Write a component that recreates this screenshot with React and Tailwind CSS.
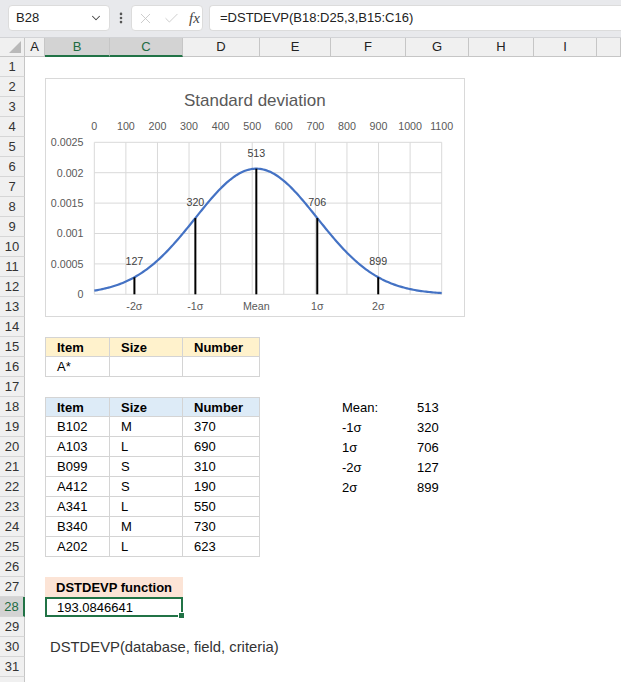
import { Check, ChevronDown, EllipsisVertical, X } from "lucide-react";

// sheet columns after the row header (25px)
const COLS = [
  ["A", "w-[20px]"],
  ["B", "w-[65px]"],
  ["C", "w-[73px]"],
  ["D", "w-[77px]"],
  ["E", "w-[71px]"],
  ["F", "w-[75px]"],
  ["G", "w-[63px]"],
  ["H", "w-[65px]"],
  ["I", "w-[63px]"],
  ["J", "flex-1"],
];

const T = "border-r border-b border-[#d4d4d4]";
const TL = "border-l border-r border-b border-[#d4d4d4]";

function RowHead({ n, active }) {
  return (
    <div
      className={[
        "flex h-[20px] w-[25px] shrink-0 items-center justify-center border-b border-b-[#d6d6d6] text-[13px]",
        active
          ? "border-r-2 border-r-[#217346] bg-[#d3d3d3] text-[#1e6b41]"
          : "border-r border-r-[#c6c6c6] bg-[#f0f0f0] text-[#333]",
      ].join(" ")}
    >
      {n}
    </div>
  );
}

function Row({ n, active, cells = {} }) {
  const out = [];
  for (let i = 0; i < COLS.length; i++) {
    const [k, w] = COLS[i];
    const c = cells[k];
    const pad = c?.pl || "pl-[11px]";
    if (c && c.merge) {
      out.push(
        <div key={k} className={["relative flex h-full w-[138px] shrink-0 items-center whitespace-nowrap pt-[1px]", pad, c.cls || ""].join(" ")}>
          {c.t}
          {c.handle && (
            <span className="absolute -bottom-[4px] -right-[4px] h-[7px] w-[7px] border border-white bg-[#217346]" />
          )}
        </div>
      );
      i++;
      continue;
    }
    out.push(
      <div key={k} className={[w, "flex h-full shrink-0 items-center whitespace-nowrap pt-[1px]", pad, c?.cls || ""].join(" ")}>
        {c?.t}
      </div>
    );
  }
  return (
    <div className="flex h-[20px]">
      <RowHead n={n} active={active} />
      {out}
    </div>
  );
}

function Chart() {
  const x0 = 49.3, x1 = 396.7, yt = 64.3, yb = 216.3;
  const px = (v) => x0 + (v / 1100) * (x1 - x0);
  const py = (p) => yb - (p / 0.0025) * (yb - yt);
  const mean = 513, sd = 193.0846641;
  const pdf = (v) => Math.exp(-((v - mean) ** 2) / (2 * sd * sd)) / (sd * Math.sqrt(2 * Math.PI));

  const pts = [];
  for (let v = 0; v <= 1100; v += 5) pts.push(`${px(v).toFixed(2)},${py(pdf(v)).toFixed(2)}`);

  const xs = [0, 100, 200, 300, 400, 500, 600, 700, 800, 900, 1000, 1100];
  const ys = [0, 0.0005, 0.001, 0.0015, 0.002, 0.0025];
  const yLabels = ["0", "0.0005", "0.001", "0.0015", "0.002", "0.0025"];
  const marks = [
    { v: 127, label: "-2σ" },
    { v: 320, label: "-1σ" },
    { v: 513, label: "Mean" },
    { v: 706, label: "1σ" },
    { v: 899, label: "2σ" },
  ];

  return (
    <svg width="418" height="237" viewBox="1 1 418 237" className="block font-['Liberation_Sans',Arial,sans-serif]">
      <text x="209.8" y="27.5" textAnchor="middle" fontSize="17" fill="#595959">Standard deviation</text>

      {xs.map((v) => (
        <line key={"gx" + v} x1={px(v)} x2={px(v)} y1={yt} y2={yb} stroke="#d9d9d9" strokeWidth="1" />
      ))}
      {ys.map((p) => (
        <line key={"gy" + p} x1={x0} x2={x1} y1={py(p)} y2={py(p)} stroke="#d9d9d9" strokeWidth="1" />
      ))}

      {xs.map((v) => (
        <text key={"tx" + v} x={px(v)} y="52" textAnchor="middle" fontSize="10.7" fill="#595959">{v}</text>
      ))}
      {ys.map((p, i) => (
        <text key={"ty" + p} x="38.5" y={py(p) + 3.8} textAnchor="end" fontSize="10.7" fill="#595959">{yLabels[i]}</text>
      ))}

      <polyline points={pts.join(" ")} fill="none" stroke="#4472c4" strokeWidth="2.2" strokeLinejoin="round" />

      {marks.map((m) => {
        const top = py(pdf(m.v));
        return (
          <g key={m.v}>
            <line x1={px(m.v)} x2={px(m.v)} y1={top} y2={yb} stroke="#000" strokeWidth="2" />
            <text x={px(m.v)} y={top - 12} textAnchor="middle" fontSize="10.7" fill="#404040">{m.v}</text>
            <text x={px(m.v)} y="232" textAnchor="middle" fontSize="10.7" fill="#595959">{m.label}</text>
          </g>
        );
      })}
    </svg>
  );
}

export default function App() {
  const stats = [
    ["Mean:", "513"],
    ["-1σ", "320"],
    ["1σ", "706"],
    ["-2σ", "127"],
    ["2σ", "899"],
  ];
  const data = [
    ["B102", "M", "370"],
    ["A103", "L", "690"],
    ["B099", "S", "310"],
    ["A412", "S", "190"],
    ["A341", "L", "550"],
    ["B340", "M", "730"],
    ["A202", "L", "623"],
  ];

  return (
    <div className="h-[682px] w-[621px] overflow-hidden bg-white font-['Liberation_Sans',Arial,sans-serif] text-[13px] text-black">
      {/* ── Formula bar ── */}
      <div className="flex h-[38px] items-center border-b border-[#d2d3d6] bg-[#e8e9ec] pb-[1px]">
        <div className="ml-[8px] flex h-[26px] w-[102px] items-center justify-between rounded-[4px] border border-[#dcdcdc] bg-white pl-[7px] pr-[6px] text-[13px] text-[#222]">
          <span>B28</span>
          <ChevronDown size={14} strokeWidth={1.8} className="text-[#444]" />
        </div>
        <div className="flex w-[21px] justify-center text-[#555]">
          <EllipsisVertical size={14} strokeWidth={2.5} />
        </div>
        <div className="flex h-[26px] w-[72px] items-center gap-[9px] rounded-[4px] border border-[#dcdcdc] bg-white pl-[5px] text-[#c4c4c4]">
          <X size={17} strokeWidth={1.2} />
          <Check size={17} strokeWidth={1.2} />
          <span className="font-['Liberation_Serif',serif] text-[15px] italic text-[#444]">fx</span>
        </div>
        <div className="ml-[6px] flex h-[26px] flex-1 items-center rounded-l-[4px] border border-r-0 border-[#dcdcdc] bg-white pl-[10px] text-[13px] text-[#222]">
          =DSTDEVP(B18:D25,3,B15:C16)
        </div>
      </div>

      {/* ── Column headers ── */}
      <div className="flex h-[19px] bg-[#f0f0f0] text-[13px] text-[#222]">
        <div className="relative w-[25px] shrink-0 border-r border-b border-[#c6c6c6]">
          <svg width="12" height="12" className="absolute bottom-[3px] right-[3px]">
            <polygon points="12,0 12,12 0,12" fill="#b9b9b9" />
          </svg>
        </div>
        {COLS.map(([k, w]) => (
          <div
            key={k}
            className={[
              w,
              "flex shrink-0 items-center justify-center border-r border-r-[#c6c6c6]",
              k === "B" || k === "C"
                ? "border-b-2 border-b-[#217346] bg-[#d3d3d3] text-[#1e6b41]"
                : "border-b border-b-[#c6c6c6]",
            ].join(" ")}
          >
            {k === "J" ? "" : k}
          </div>
        ))}
      </div>

      <Row n={1} />

      {/* ── Chart rows 2-13 ── */}
      <div className="flex">
        <div className="flex flex-col">
          {[2, 3, 4, 5, 6, 7, 8, 9, 10, 11, 12, 13].map((n) => (
            <RowHead key={n} n={n} />
          ))}
        </div>
        <div className="w-[20px] shrink-0" />
        <div className="mt-[1px] h-[239px] w-[420px] shrink-0 border border-[#d9d9d9] bg-white">
          <Chart />
        </div>
      </div>

      <Row n={14} />
      <Row
        n={15}
        cells={{
          B: { t: "Item", cls: `font-bold bg-[#fff2cc] border-t ${TL}` },
          C: { t: "Size", cls: `font-bold bg-[#fff2cc] border-t ${T}` },
          D: { t: "Number", cls: `font-bold bg-[#fff2cc] border-t ${T}` },
        }}
      />
      <Row n={16} cells={{ B: { t: "A*", cls: TL }, C: { cls: T }, D: { cls: T } }} />
      <Row n={17} />
      <Row
        n={18}
        cells={{
          B: { t: "Item", cls: `font-bold bg-[#ddebf7] border-t ${TL}` },
          C: { t: "Size", cls: `font-bold bg-[#ddebf7] border-t ${T}` },
          D: { t: "Number", cls: `font-bold bg-[#ddebf7] border-t ${T}` },
          F: { t: stats[0][0] },
          G: { t: stats[0][1] },
        }}
      />
      {data.map((r, i) => (
        <Row
          key={r[0]}
          n={19 + i}
          cells={{
            B: { t: r[0], cls: TL },
            C: { t: r[1], cls: T },
            D: { t: r[2], cls: T },
            ...(stats[i + 1] ? { F: { t: stats[i + 1][0] }, G: { t: stats[i + 1][1] } } : {}),
          }}
        />
      ))}
      <Row n={26} />
      <Row n={27} cells={{ B: { merge: true, t: "DSTDEVP function", cls: "font-bold bg-[#fce4d6]" } }} />
      <Row
        n={28}
        active
        cells={{ B: { merge: true, handle: true, pl: "pl-[10px]", t: "193.0846641", cls: "border-2 border-[#217346]" } }}
      />
      <Row n={29} />
      <Row n={30} cells={{ B: { pl: "pl-[5px]", t: "DSTDEVP(database, field, criteria)", cls: "text-[14.8px] text-[#333]" } }} />
      <Row n={31} />
      <Row n="" />
    </div>
  );
}
